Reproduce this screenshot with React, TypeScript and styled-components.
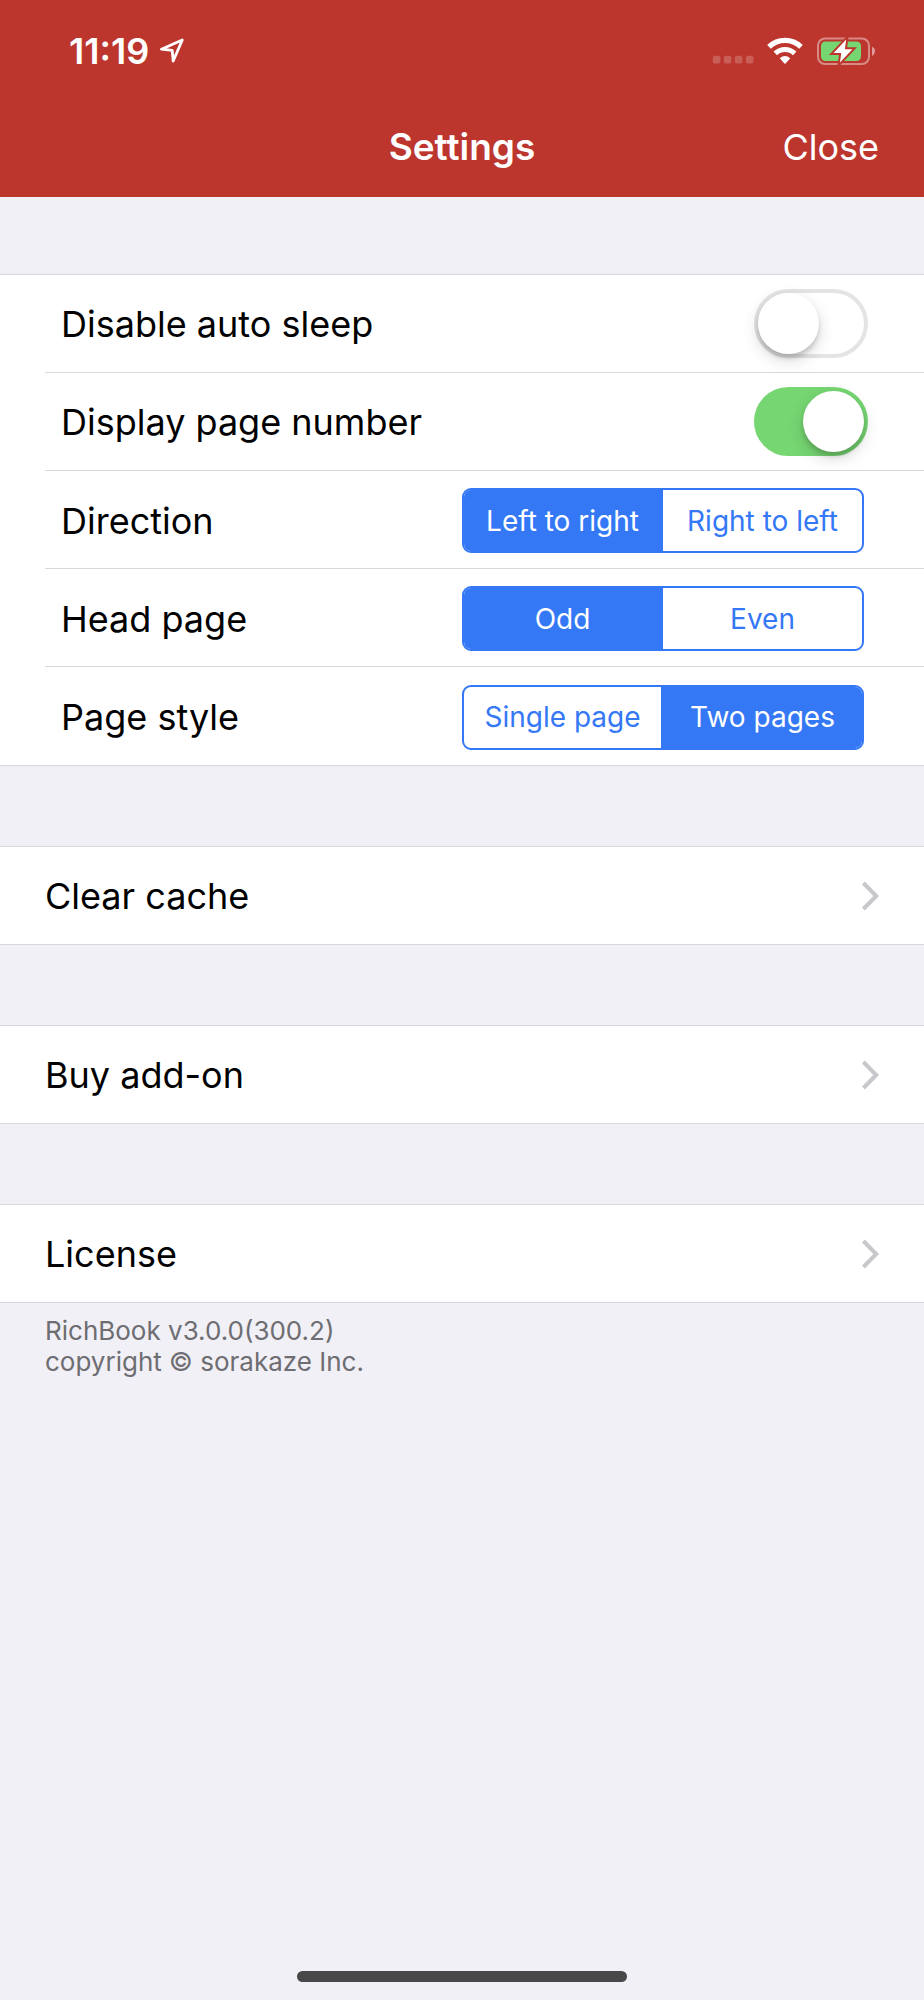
import React, { useState } from "react";
import styled, { createGlobalStyle } from "styled-components";

const GlobalStyle = createGlobalStyle`
  *, *::before, *::after { box-sizing: border-box; }
  body {
    margin: 0;
    background: #f1f0f6;
    color: #000;
    font-family: Inter, "Liberation Sans", sans-serif;
    font-size: 36px;
    line-height: 44px;
  }
  button, input { font: inherit; }
`;

const Screen = styled.div`
  min-height: 100vh;
  display: flex;
  flex-direction: column;
`;

const Header = styled.header`
  background: #bc362e;
  color: #fff;
`;

const StatusBar = styled.div`
  height: 99px;
  padding: 2px 48px 0 69px;
  display: flex;
  align-items: center;
  justify-content: space-between;
`;

const StatusGroup = styled.div<{ $gap: number }>`
  display: flex;
  align-items: center;
  gap: ${(p) => p.$gap}px;
`;

const Time = styled.span`
  font-size: 36px;
  font-weight: 600;
`;

const NavBar = styled.nav`
  height: 98px;
  padding: 0 45px 2px;
  display: grid;
  grid-template-columns: 1fr auto 1fr;
  align-items: center;
`;

const Title = styled.h1`
  grid-column: 2;
  margin: 0;
  font-size: 37px;
  font-weight: 600;
`;

const CloseButton = styled.button`
  justify-self: end;
  padding: 0;
  border: 0;
  background: none;
  color: inherit;
  cursor: pointer;
`;

const Main = styled.main`
  flex: 1;
  padding-top: 77px;
  display: flex;
  flex-direction: column;
  gap: 80px;
`;

const Group = styled.section`
  background: #fff;
  border-top: 1px solid #d8d8dc;
  border-bottom: 1px solid #d8d8dc;
`;

const SettingRow = styled.div`
  height: 98px;
  margin-left: 45px;
  padding-left: 16px;
  display: flex;
  align-items: center;
  justify-content: space-between;
  border-bottom: 1px solid #d8d8da;

  &:last-child { border-bottom: 0; }
`;

const SwitchRow = styled(SettingRow)`
  padding-right: 56px;
`;

const ChoiceRow = styled(SettingRow)`
  padding-top: 2px;
  padding-right: 60px;
`;

const Switch = styled.input`
  appearance: none;
  margin: 0;
  width: 114px;
  height: 69px;
  padding: 0;
  display: flex;
  align-items: center;
  border: 4px solid #e4e4e4;
  border-radius: 35px;
  background: #fff;
  cursor: pointer;

  &::before {
    content: "";
    width: 61px;
    height: 61px;
    border-radius: 50%;
    background: #fff;
    box-shadow: 0 6px 16px rgba(0, 0, 0, 0.16), 0 4px 4px rgba(0, 0, 0, 0.14);
  }

  &:checked {
    justify-content: flex-end;
    border-color: #76d672;
    background: #76d672;
  }
`;

const Segments = styled.div`
  width: 402px;
  height: 65px;
  display: grid;
  grid-template-columns: 1fr 1fr;
  overflow: hidden;
  border: 2px solid #3478f6;
  border-radius: 9px;
  background: #fff;
`;

const Segment = styled.label`
  display: flex;
  align-items: center;
  justify-content: center;
  color: #3478f6;
  font-size: 28px;
  line-height: 34px;
  cursor: pointer;

  &:first-child { border-right: 2px solid #3478f6; }
  &:has(input:checked) {
    background: #3478f6;
    color: #fff;
  }
`;

const SegmentInput = styled.input`
  appearance: none;
  width: 0;
  height: 0;
  margin: 0;
`;

const LinkRow = styled.a`
  height: 97px;
  padding: 0 45px;
  display: flex;
  align-items: center;
  justify-content: space-between;
  color: inherit;
  text-decoration: none;
`;

const LicenseBlock = styled.div`
  display: flex;
  flex-direction: column;
  gap: 12px;
`;

const Version = styled.p`
  margin: 0;
  padding: 0 45px;
  color: #6d6d72;
  font-size: 26px;
  line-height: 31px;
`;

const HomeIndicator = styled.div`
  align-self: center;
  width: 330px;
  height: 11px;
  margin-bottom: 18px;
  border-radius: 6px;
  background: #484848;
`;

const LocationIcon = () => (
  <svg width="26" height="26" viewBox="0 0 26 26" aria-hidden="true">
    <path d="M23.3 2 L2.4 11.2 L13.2 12.4 L14.2 23 Z" fill="none" stroke="#fff" strokeWidth="2.8" strokeLinejoin="round" />
  </svg>
);

const SignalIcon = () => (
  <svg width="42" height="28" viewBox="0 0 42 28" fill="#fff" fillOpacity="0.2" aria-hidden="true">
    {[0, 11, 22, 33].map((x) => (
      <rect key={x} x={x + 0.8} y="18.8" width="7.6" height="7.6" rx="2" />
    ))}
  </svg>
);

const WifiIcon = () => (
  <svg width="38" height="28" viewBox="0 0 38 28" aria-hidden="true">
    <path d="M3 9.8 A23 23 0 0 1 35 9.8" fill="none" stroke="#fff" strokeWidth="5.2" />
    <path d="M9.3 16.4 A13.8 13.8 0 0 1 28.7 16.4" fill="none" stroke="#fff" strokeWidth="5" />
    <path d="M13.8 21.2 Q19 16.6 24.2 21.2 L19.6 26.4 Q19 27 18.4 26.4 Z" fill="#fff" />
  </svg>
);

const BatteryIcon = () => (
  <svg width="60" height="30" viewBox="0 0 60 30" aria-hidden="true">
    <rect x="2" y="2.5" width="51" height="25.5" rx="7" fill="none" stroke="#fff" strokeOpacity="0.42" strokeWidth="2" />
    <path d="M56 10.5 Q59 12.2 59 15.2 Q59 18.2 56 19.9 Z" fill="#fff" fillOpacity="0.5" />
    <rect x="5" y="5.5" width="40" height="19.5" rx="4.5" fill="#76d672" />
    <path d="M30.2 3.6 L17.6 17 H25.2 L24 26.4 L36.4 13.2 H28.9 Z" fill="#fff" stroke="#bc362e" strokeWidth="4" paintOrder="stroke" strokeLinejoin="miter" />
  </svg>
);

const ChevronIcon = () => (
  <svg width="18" height="32" viewBox="0 0 18 32" aria-hidden="true">
    <path d="M2.4 3 L15.2 16 L2.4 29" fill="none" stroke="#c7c7cc" strokeWidth="4" />
  </svg>
);

function ToggleSetting({ id, label, initial }: { id: string; label: string; initial: boolean }) {
  const [on, setOn] = useState(initial);
  return (
    <SwitchRow>
      <label htmlFor={id}>{label}</label>
      <Switch id={id} type="checkbox" role="switch" checked={on} onChange={(e) => setOn(e.target.checked)} />
    </SwitchRow>
  );
}

function ChoiceSetting({ id, label, options, initial }: { id: string; label: string; options: string[]; initial: string }) {
  const [value, setValue] = useState(initial);
  return (
    <ChoiceRow>
      <span id={id}>{label}</span>
      <Segments role="radiogroup" aria-labelledby={id}>
        {options.map((option) => (
          <Segment key={option}>
            <SegmentInput type="radio" name={id} checked={value === option} onChange={() => setValue(option)} />
            {option}
          </Segment>
        ))}
      </Segments>
    </ChoiceRow>
  );
}

function LinkGroup({ href, label }: { href: string; label: string }) {
  return (
    <Group>
      <LinkRow href={href}>
        {label}
        <ChevronIcon />
      </LinkRow>
    </Group>
  );
}

export default function App() {
  return (
    <Screen>
      <GlobalStyle />
      <Header>
        <StatusBar>
          <StatusGroup $gap={10}>
            <Time>11:19</Time>
            <LocationIcon />
          </StatusGroup>
          <StatusGroup $gap={12}>
            <SignalIcon />
            <WifiIcon />
            <BatteryIcon />
          </StatusGroup>
        </StatusBar>
        <NavBar>
          <Title>Settings</Title>
          <CloseButton type="button">Close</CloseButton>
        </NavBar>
      </Header>
      <Main>
        <Group>
          <ToggleSetting id="auto-sleep" label="Disable auto sleep" initial={false} />
          <ToggleSetting id="page-number" label="Display page number" initial={true} />
          <ChoiceSetting id="direction" label="Direction" options={["Left to right", "Right to left"]} initial="Left to right" />
          <ChoiceSetting id="head-page" label="Head page" options={["Odd", "Even"]} initial="Odd" />
          <ChoiceSetting id="page-style" label="Page style" options={["Single page", "Two pages"]} initial="Two pages" />
        </Group>
        <LinkGroup href="#cache" label="Clear cache" />
        <LinkGroup href="#add-on" label="Buy add-on" />
        <LicenseBlock>
          <LinkGroup href="#license" label="License" />
          <Version>
            RichBook v3.0.0(300.2)
            <br />
            copyright © sorakaze Inc.
          </Version>
        </LicenseBlock>
      </Main>
      <HomeIndicator />
    </Screen>
  );
}
